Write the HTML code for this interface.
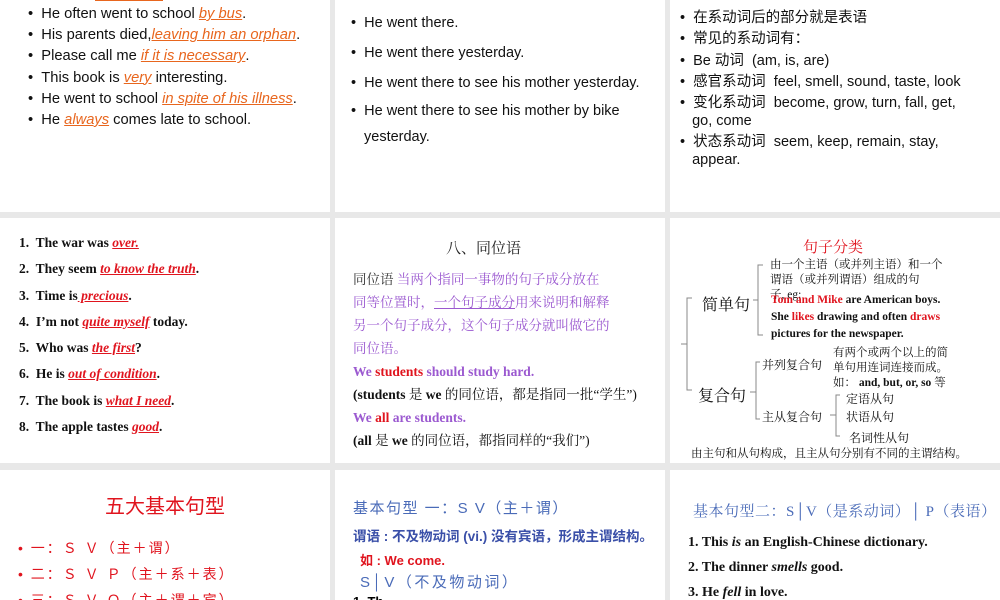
<!DOCTYPE html>
<html><head><meta charset="utf-8"><style>
body{margin:0;width:1000px;height:600px;background:#e8e8e8;position:relative;overflow:hidden;font-family:"Liberation Sans","Noto Sans CJK SC",sans-serif}
.s{position:absolute;background:#fff;overflow:hidden}
.t{position:absolute;white-space:nowrap}
.o{color:#e8661e;font-style:italic;text-decoration:underline}
.sf{font-family:"Liberation Serif","Noto Serif CJK SC",serif}
.r{color:#e0141e;font-style:italic;text-decoration:underline}
.p{color:#9b59d0}
.rd{color:#e0141e}
.b{color:#4a6bb8}
</style></head><body>
<div class="s" style="left:0;top:0;width:330px;height:212px">
<div class="t" style="left:95px;top:-8px;width:68px;height:8px;border-bottom:1px solid #e8661e"></div>
<div style="position:absolute;left:28px;top:4px;font-size:14.7px;line-height:21.2px;color:#111">
<div>• &nbsp;He often went to school <span class="o">by bus</span>.</div>
<div>• &nbsp;His parents died,<span class="o">leaving him an orphan</span>.</div>
<div>• &nbsp;Please call me <span class="o">if it is necessary</span>.</div>
<div>• &nbsp;This book is <span class="o">very</span> interesting.</div>
<div>• &nbsp;He went to school <span class="o">in spite of his illness</span>.</div>
<div>• &nbsp;He <span class="o">always</span> comes late to school.</div>
</div></div>
<div class="s" style="left:335px;top:0;width:330px;height:212px">
<div style="position:absolute;left:16px;top:8px;font-size:14.5px;color:#111;line-height:30px">
<div>• &nbsp;He went there.</div><div>• &nbsp;He went there yesterday.</div><div>• &nbsp;He went there to see his mother yesterday.</div>
<div style="line-height:26px">• &nbsp;He went there to see his mother by bike</div><div style="line-height:26px;padding-left:13px">yesterday.</div></div></div>
<div class="s" style="left:670px;top:0;width:330px;height:212px">
<div style="position:absolute;left:10px;top:8px;font-size:14.5px;color:#111;line-height:21.3px">
<div>• &nbsp;在系动词后的部分就是表语</div><div>• &nbsp;常见的系动词有：</div><div>• &nbsp;Be 动词 &nbsp;(am, is, are)</div><div>• &nbsp;感官系动词 &nbsp;feel, smell, sound, taste, look</div>
<div style="line-height:18px;margin-top:1px">• &nbsp;变化系动词 &nbsp;become, grow, turn, fall, get,<br>&nbsp;&nbsp;&nbsp;go, come</div>
<div style="line-height:18px;margin-top:3px">• &nbsp;状态系动词 &nbsp;seem, keep, remain, stay,<br>&nbsp;&nbsp;&nbsp;appear.</div></div></div>

<div class="s sf" style="left:0;top:218px;width:330px;height:245px">
<div style="position:absolute;left:19px;top:12px;font-size:13.5px;font-weight:bold;line-height:26.3px;color:#111">
<div>1.&nbsp; The war was <span class="r">over.</span></div><div>2.&nbsp; They seem <span class="r">to know the truth</span>.</div><div>3.&nbsp; Time is<span class="r"> precious</span>.</div><div>4.&nbsp; I’m not <span class="r">quite myself</span> today.</div><div>5.&nbsp; Who was <span class="r">the first</span>?</div><div>6.&nbsp; He is <span class="r">out of condition</span>.</div><div>7.&nbsp; The book is <span class="r">what I need</span>.</div><div>8.&nbsp; The apple tastes <span class="r">good</span>.</div></div></div>
<div class="s sf" style="left:335px;top:218px;width:330px;height:245px">
<div class="t" style="left:111px;top:19px;font-size:15px;color:#222">八、同位语</div>
<div style="position:absolute;left:18px;top:50px;font-size:13.5px;line-height:23px">
<div><span style="color:#333">同位语</span> <span class="p">当两个指同一事物的句子成分放在</span></div>
<div class="p">同等位置时，<span style="text-decoration:underline">一个句子成分</span>用来说明和解释</div>
<div class="p">另一个句子成分，这个句子成分就叫做它的</div>
<div class="p">同位语。</div>
<div style="font-weight:bold" class="p">We <span class="rd">students</span> should study hard.</div>
<div style="color:#111;white-space:nowrap"><b>(students</b> 是 <b>we</b> 的同位语，都是指同一批“学生”)</div>
<div style="font-weight:bold" class="p">We <span class="rd">all</span> are students.</div>
<div style="color:#111"><b>(all</b> 是 <b>we</b> 的同位语，都指同样的“我们”)</div></div></div>
<div class="s sf" style="left:670px;top:218px;width:330px;height:245px">
<svg style="position:absolute;left:0;top:0" width="330" height="245" fill="none" stroke="#888" stroke-width="1">
<path d="M22 80 H17 V172 H22"/><path d="M11 126 H17"/>
<path d="M93 47 H88 V117 H93"/><path d="M83 82 H88"/>
<path d="M90 144 H86 V201 H90"/><path d="M80 174 H86"/>
<path d="M170 177 H166 V218 H170"/><path d="M160 197 H166"/>
</svg>
<div class="t" style="left:133px;top:18px;font-size:15px;color:#e0141e">句子分类</div>
<div class="t" style="left:32px;top:74px;font-size:16px;color:#111">简单句</div>
<div class="t" style="left:28px;top:165px;font-size:16px;color:#111">复合句</div>
<div style="position:absolute;left:100px;top:40px;font-size:11.5px;line-height:15px;color:#111">由一个主语（或并列主语）和一个<br>谓语（或并列谓语）组成的句<br>子, eg:</div>
<div class="t" style="left:101px;top:74px;font-size:11.5px;font-weight:bold;color:#111;line-height:17px"><span class="rd">Tom and Mike</span> are American boys.<br>She <span class="rd">likes</span> drawing and often <span class="rd">draws</span><br>pictures for the newspaper.</div>
<div class="t" style="left:92px;top:138px;font-size:12px;color:#111">并列复合句</div>
<div class="t" style="left:163px;top:128px;font-size:11.5px;line-height:15px;color:#111">有两个或两个以上的简<br>单句用连词连接而成。<br>如： <b>and, but, or, so</b> 等</div>
<div class="t" style="left:92px;top:190px;font-size:12px;color:#111">主从复合句</div>
<div class="t" style="left:176px;top:172px;font-size:12px;color:#111">定语从句</div>
<div class="t" style="left:176px;top:190px;font-size:12px;color:#111">状语从句</div>
<div class="t" style="left:179px;top:211px;font-size:12px;color:#111">名词性从句</div>
<div class="t" style="left:21px;top:227px;font-size:11.5px;color:#111">由主句和从句构成，且主从句分别有不同的主谓结构。</div>
</div>

<div class="s" style="left:0;top:470px;width:330px;height:130px">
<div class="t" style="left:105px;top:20px;font-size:20px;color:#e0141e">五大基本句型</div>
<div style="position:absolute;left:18px;top:65px;font-size:14px;line-height:26px;color:#e0141e;letter-spacing:2px;white-space:nowrap">
<div>• 一：Ｓ Ｖ（主＋谓）</div><div>• 二：Ｓ Ｖ Ｐ（主＋系＋表）</div><div>• 三：Ｓ Ｖ Ｏ（主＋谓＋宾）</div></div></div>
<div class="s" style="left:335px;top:470px;width:330px;height:130px">
<div class="t b" style="left:18px;top:27px;font-size:15px;letter-spacing:1.5px">基本句型 一：S V（主＋谓）</div>
<div class="t" style="left:18px;top:55px;font-size:13.5px;color:#3a4fa8;font-weight:bold">谓语 : 不及物动词 (vi.) 没有宾语，形成主谓结构。</div>
<div class="t" style="left:25px;top:80px;font-size:13px;color:#e0141e;font-weight:bold">如 : We come.</div>
<div class="t b" style="left:25px;top:101px;font-size:15px;letter-spacing:2.5px">S│V（不及物动词）</div>
<div class="t" style="left:18px;top:124px;font-size:13px;font-weight:bold">1. Th</div></div>
<div class="s sf" style="left:670px;top:470px;width:330px;height:130px">
<div class="t b" style="left:23px;top:30px;font-size:15px;letter-spacing:0.5px">基本句型二：S│V（是系动词）│ P（表语）</div>
<div style="position:absolute;left:18px;top:60px;font-size:14px;font-weight:bold;line-height:25px;color:#111">
<div>1. This <i>is</i> an English-Chinese dictionary.</div><div>2. The dinner <i>smells</i> good.</div><div>3. He <i>fell</i> in love.</div></div></div>
</body></html>
